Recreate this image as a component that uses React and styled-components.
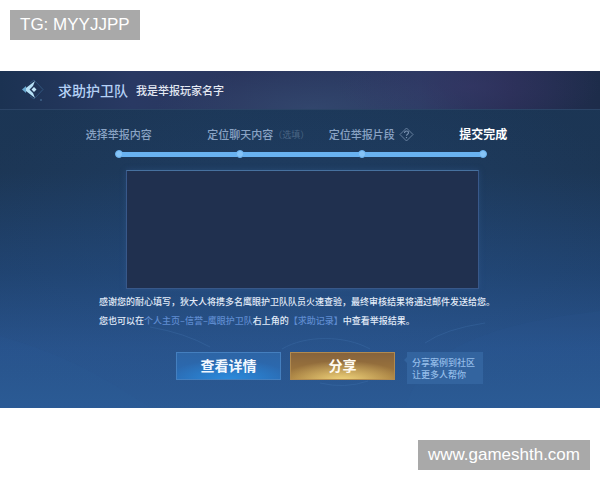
import React from 'react';
import styled, { createGlobalStyle, css } from 'styled-components';

const GlobalStyle = createGlobalStyle`
  * {
    box-sizing: border-box;
  }

  body {
    margin: 0;
    background: #fff;
    font-family: "Noto Sans CJK SC", sans-serif;
  }
`;

const Page = styled.div`
  display: flex;
  flex-direction: column;
  padding: 10px 0;
`;

const Tag = styled.div`
  align-self: ${props => (props.$end ? 'flex-end' : 'flex-start')};
  margin: 0 10px;
  padding: 0 10px;
  background: #a9a9a9;
  color: #fff;
  font-family: "Liberation Sans", Arial, sans-serif;
  font-size: 17px;
  line-height: 30px;
`;

const Panel = styled.main`
  position: relative;
  isolation: isolate;
  margin: 31px 0 32px;
  padding-bottom: 24px;
  overflow: hidden;
  background:
    radial-gradient(ellipse 60% 75% at 50% 65%, rgba(42, 88, 146, 0.3), transparent),
    linear-gradient(#1b3554 0%, #1c3655 30%, #204370 60%, #28528a 82%, #2b5a94 100%);
`;

const Scenery = styled.svg`
  position: absolute;
  z-index: -1;
  inset: 0;
  width: 100%;
  height: 100%;
`;

const Header = styled.header`
  display: flex;
  align-items: center;
  height: 39px;
  padding: 0 21px;
  border-bottom: 1px solid #2b4466;
  background:
    radial-gradient(ellipse 22% 110% at 78% 40%, rgba(58, 56, 106, 0.5), transparent),
    radial-gradient(ellipse 26% 110% at 52% 100%, rgba(58, 84, 122, 0.5), transparent),
    linear-gradient(90deg, #1b3252 0%, #293963 22%, #2a365e 40%, #2a3a62 70%, #272e54 85%, #1d2c4a 100%);
`;

const BackButton = styled.button`
  display: flex;
  margin: 0 14px 0 0;
  padding: 0;
  border: 0;
  background: none;
  cursor: pointer;
`;

const Title = styled.h1`
  margin: 0 8px 0 0;
  color: #b5d1f5;
  font-size: 14px;
  font-weight: 500;
  line-height: 20px;
`;

const Subtitle = styled.span`
  color: #e3e8f2;
  font-size: 11px;
  font-weight: 500;
  line-height: 16px;
`;

const Steps = styled.ol`
  display: grid;
  grid-template-columns: repeat(4, 1fr);
  margin: 0;
  padding: 16px 56px 12px 58px;
  list-style: none;
`;

const StepHead = styled.div`
  display: grid;
  grid-template-columns: minmax(0, 1fr) auto minmax(0, 1fr);
  align-items: center;
  height: 16px;
  margin-bottom: 8px;
  white-space: nowrap;
`;

const StepLabel = styled.span`
  grid-column: 2;
  color: #8aa3c4;
  font-size: 11px;
  font-weight: 500;
  line-height: 16px;

  ${props => props.$active && css`
    color: #fff;
    font-size: 12px;
    font-weight: 700;
  `}
`;

const Optional = styled.span`
  color: #4a6584;
  font-size: 9px;
`;

const HelpButton = styled.button`
  display: flex;
  margin: 0 0 0 4px;
  padding: 0;
  border: 0;
  background: none;
`;

const Marker = styled.div`
  display: flex;
  align-items: center;
`;

const Line = styled.span`
  flex: 1;
  height: 5px;
  background: ${props => (props.$hidden ? 'transparent' : '#69b2f0')};
`;

const Dot = styled.span`
  width: 8px;
  height: 8px;
  margin: 0 -1px;
  border: 1px solid #69b2f0;
  border-radius: 50%;
  background: #86c4f7;
`;

const Preview = styled.section`
  min-height: 119px;
  margin: 0 121px 0 126px;
  border: 1px solid #38588a;
  border-top-color: #47719f;
  background: #20304f;
  box-shadow: 0 0 6px rgba(58, 98, 158, 0.35);
`;

const Message = styled.div`
  padding: 3px 0 0 99px;
  color: #e2ebf8;
  font-size: 9px;
  font-weight: 500;
  line-height: 19px;
  white-space: nowrap;
`;

const Paragraph = styled.p`
  margin: 0;
`;

const TextLink = styled.a`
  color: #5f8cd0;
  text-decoration: none;
`;

const Actions = styled.div`
  display: flex;
  align-items: flex-start;
  gap: 9px;
  padding: 22px 20px 0 176px;
`;

const ActionButton = styled.button`
  width: 105px;
  height: 28px;
  padding: 0 0 2px;
  border: 1px solid #447fbf;
  background:
    radial-gradient(ellipse 60% 75% at 50% 100%, #2b8bdc, transparent),
    linear-gradient(#2d65a6, #2a6bb4);
  color: #f2f8ff;
  font-family: inherit;
  font-size: 14px;
  font-weight: 700;
  line-height: 20px;
  cursor: pointer;

  ${props => props.$gold && css`
    border-color: #b08a50;
    background:
      radial-gradient(ellipse 60% 75% at 50% 105%, #f0d47c, transparent),
      linear-gradient(#86633c, #a57c3c);
    color: #fffaf0;
  `}
`;

const Hint = styled.p`
  margin: 0;
  padding: 5px 8px 3px;
  background: #33649f;
  clip-path: polygon(3px 0, 100% 0, 100% 100%, 3px 100%, 3px 11px, 0 8px, 3px 5px);
  color: #94bce8;
  font-size: 9px;
  font-weight: 500;
  line-height: 12px;
  white-space: nowrap;
`;

const STEPS = [
  { label: '选择举报内容' },
  { label: '定位聊天内容', optional: true },
  { label: '定位举报片段', help: true },
  { label: '提交完成', active: true },
];

const BackIcon = () => (
  <svg width="23" height="24" viewBox="0 0 23 24" fill="none">
    <path d="M9 5l4-3 9 9.500-9 9.500-4-3" stroke="#31557e" />
    <path d="M14 3L3 11.500 14 20l-2-5-3.500-3.500L12 8z" fill="#b5e0f6" />
    <path d="M1 11.500L5 8v7z" fill="#6aa9d0" />
    <path d="M13 9l2.500 2.500L13 14l-2.500-2.500z" fill="#c4e8fb" />
    <circle cx="20" cy="22" r="1" fill="#3f6289" />
  </svg>
);

const HelpIcon = () => (
  <svg width="15" height="15" viewBox="0 0 15 15" fill="none" stroke="#7890af">
    <path d="M7.5 1L14 7.5 7.5 14 1 7.5z" strokeWidth="0.8" />
    <path d="M5.5 6c0-2.800 4-2.600 4-.2 0 1.400-2 1.500-2 3" strokeWidth="1.100" />
    <path d="M7.500 10v1.200" strokeWidth="1.200" />
  </svg>
);

const Backdrop = () => (
  <Scenery viewBox="0 0 600 337" preserveAspectRatio="none" fill="none" aria-hidden="true">
    <path d="M405 337C420 285 470 255 600 240V337z" fill="#3268a8" opacity="0.08" />
    <path d="M0 265C70 285 110 310 150 337H0z" fill="#3268a8" opacity="0.08" />
    <g stroke="#4b80bd" opacity="0.25">
      <path d="M282 278C305 264 345 264 370 278" />
      <path d="M150 256Q185 262 210 276" />
      <path d="M320 312Q345 318 368 310" />
      <path d="M425 272Q445 258 485 252" />
    </g>
  </Scenery>
);

const Step = ({ step, first, last }) => (
  <li>
    <StepHead>
      <StepLabel $active={step.active}>{step.label}</StepLabel>
      {step.optional && <Optional>（选填）</Optional>}
      {step.help && (
        <HelpButton type="button" aria-label="帮助">
          <HelpIcon />
        </HelpButton>
      )}
    </StepHead>
    <Marker>
      <Line $hidden={first} />
      <Dot />
      <Line $hidden={last} />
    </Marker>
  </li>
);

const App = () => (
  <React.Fragment>
    <GlobalStyle />
    <Page>
      <Tag>TG: MYYJJPP</Tag>
      <Panel>
        <Backdrop />
        <Header>
          <BackButton type="button" aria-label="返回">
            <BackIcon />
          </BackButton>
          <Title>求助护卫队</Title>
          <Subtitle>我是举报玩家名字</Subtitle>
        </Header>
        <Steps>
          {STEPS.map((step, index) => (
            <Step
              key={step.label}
              step={step}
              first={index === 0}
              last={index === STEPS.length - 1}
            />
          ))}
        </Steps>
        <Preview />
        <Message>
          <Paragraph>
            感谢您的耐心填写，狄大人将携多名鹰眼护卫队队员火速查验，最终审核结果将通过邮件发送给您。
          </Paragraph>
          <Paragraph>
            您也可以在
            <TextLink href="#profile">个人主页–信誉–鹰眼护卫队</TextLink>
            右上角的
            <TextLink href="#records">【求助记录】</TextLink>
            中查看举报结果。
          </Paragraph>
        </Message>
        <Actions>
          <ActionButton type="button">查看详情</ActionButton>
          <ActionButton type="button" $gold>分享</ActionButton>
          <Hint>
            分享案例到社区
            <br />
            让更多人帮你
          </Hint>
        </Actions>
      </Panel>
      <Tag $end>www.gameshth.com</Tag>
    </Page>
  </React.Fragment>
);

export default App;
